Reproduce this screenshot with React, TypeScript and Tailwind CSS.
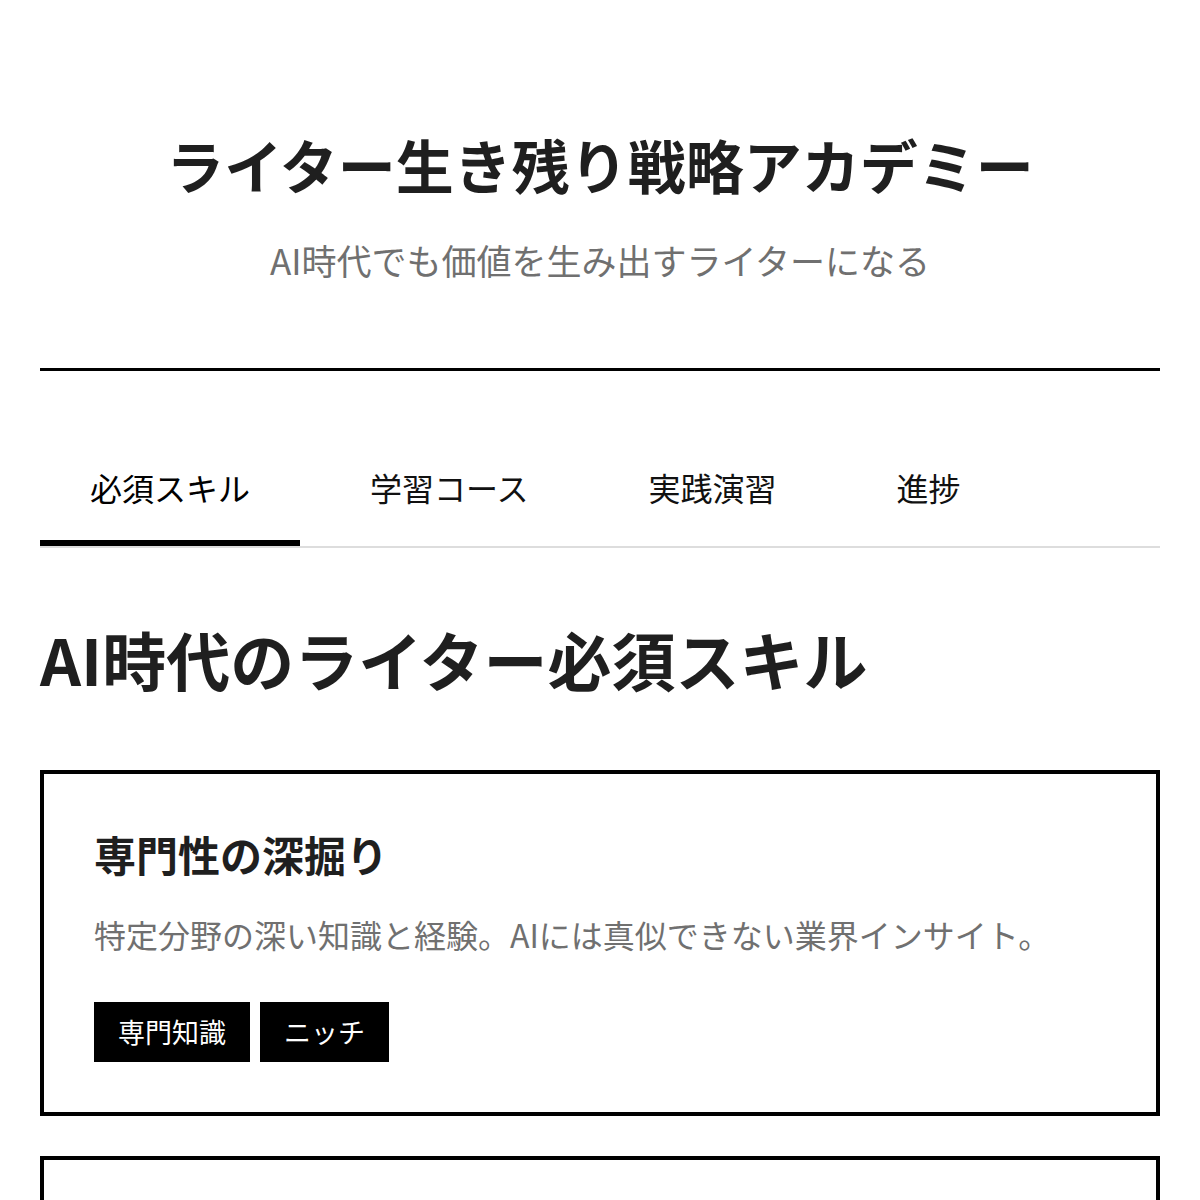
import React from 'react';

interface ISkill {
  title: string;
  body: string;
  tags: string[];
}

const tabs = ['必須スキル', '学習コース', '実践演習', '進捗'];

const skills: ISkill[] = [
  {
    title: '専門性の深掘り',
    body: '特定分野の深い知識と経験。AIには真似できない業界インサイト。',
    tags: ['専門知識', 'ニッチ'],
  },
  {
    title: '一次情報の取材力',
    body: '現場に足を運び、人に会って話を聞く。AIが持たない生の情報。',
    tags: ['取材', 'インタビュー'],
  },
];

// ----------------------------------------------------------------

const SkillCard: React.FC<{ skill: ISkill }> = ({ skill }) => {
  return (
    <div className="border-4 border-black p-[50px]">
      <h3 className="text-[42px] font-bold leading-[60px] text-[#1f1f1f]">
        {skill.title}
      </h3>
      <p className="mt-[26px] text-[32px] leading-[48px] text-[#707070]">
        {skill.body}
      </p>
      <div className="mt-[44px] flex gap-[10px]">
        {skill.tags.map((tag) => (
          <span
            key={tag}
            className="bg-black px-[24px] py-[10px] text-[27px] leading-[40px] text-white"
          >
            {tag}
          </span>
        ))}
      </div>
    </div>
  );
};

const App: React.FC = () => {
  return (
    <div
      className="min-h-screen bg-white px-10 text-[#111]"
      style={{ fontFamily: '"Noto Sans CJK JP", "Noto Sans", sans-serif' }}
    >
      <header className="border-b-[3px] border-black pb-[82px] pt-[129px] text-center">
        <h1 className="text-[58px] font-bold leading-[70px] text-[#1f1f1f]">
          ライター生き残り戦略アカデミー
        </h1>
        <p className="mt-[35px] text-[35px] leading-[52px] text-[#707070]">
          AI時代でも価値を生み出すライターになる
        </p>
      </header>

      <nav className="mt-[67px] flex gap-5 border-b-2 border-[#dddddd]">
        {tabs.map((tab, i) => (
          <button
            key={tab}
            className={
              i === 0
                ? 'border-b-[6px] border-black px-[50px] pb-[29px] pt-[25px] text-[32px] leading-[48px] text-black'
                : 'border-b-[6px] border-transparent px-[50px] pb-[29px] pt-[25px] text-[32px] leading-[48px] text-[#111]'
            }
          >
            {tab}
          </button>
        ))}
      </nav>

      <main>
        <h2 className="mt-[72px] text-[64px] font-bold leading-[76px] text-[#1f1f1f]">
          AI時代のライター必須スキル
        </h2>
        <div className="mt-[74px] flex flex-col gap-10 pb-20">
          {skills.map((s) => (
            <SkillCard key={s.title} skill={s} />
          ))}
        </div>
      </main>
    </div>
  );
};

export default App;
